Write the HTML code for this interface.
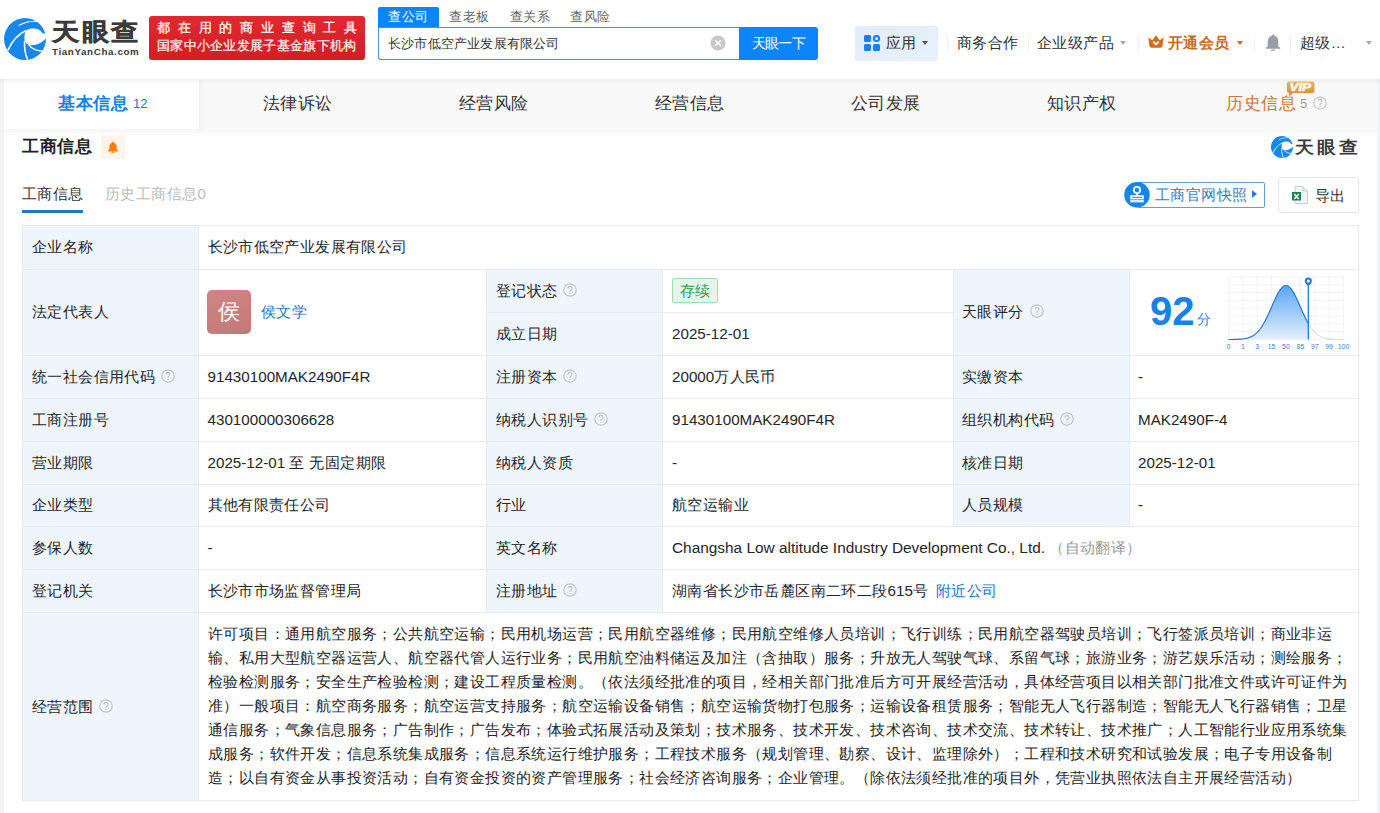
<!DOCTYPE html>
<html><head><meta charset="utf-8">
<style>
*{box-sizing:border-box;margin:0;padding:0}
html,body{width:1380px;height:813px;overflow:hidden}
body{background:#f2f3f5;font-family:"Liberation Sans",sans-serif;color:#333;position:relative}
.a{position:absolute;white-space:nowrap}
.s{}
</style></head><body>
<div class="a" style="left:0px;top:0px;width:1380px;height:79px;background:#fff;"></div>
<svg class="a" style="left:4px;top:18px" width="42" height="42" viewBox="0 0 100 100"><circle cx="50" cy="50" r="50" fill="#1787ec"/>
<path d="M53 30 C58 25 65 24.5 72 25 C82 26 89 30 91 36 L101 38 L101 47.7 C90 60 72 67 59 64 C52 60 48.5 55 48.5 48 C48.5 40 50 34 53 30 Z" fill="#fff"/>
<path d="M9 77 C17 60 30 40 53 30" fill="none" stroke="#fff" stroke-width="3.8"/>
<path d="M35 18 C49 10 64 6.5 79 8" fill="none" stroke="#fff" stroke-width="2.6"/>
<path d="M56.5 99 C50 86 48 72 49 54" fill="none" stroke="#fff" stroke-width="3.8"/>
<path d="M59 64 C66 73 78 78.5 92 79" fill="none" stroke="#fff" stroke-width="3.2"/></svg>
<div class="a " style="left:52px;top:17.0px;font-size:27px;line-height:30px;color:#3b3b3b;letter-spacing:2.5px;font-weight:bold;transform:scaleY(0.88);transform-origin:0 50%;-webkit-text-stroke:0.6px #3b3b3b;">天眼查</div>
<div class="a " style="left:52px;top:46.0px;font-size:9.8px;line-height:12px;color:#3b3b3b;letter-spacing:0.62px;font-weight:bold;">TianYanCha.com</div>
<div class="a" style="left:149px;top:16px;width:216px;height:44px;background:linear-gradient(180deg,#e2282e,#d21e26);border-radius:3px;"></div>
<div class="a " style="left:157px;top:20.0px;font-size:13px;line-height:16px;color:#fdf1ea;letter-spacing:7.8px;-webkit-text-stroke:0.35px #fdf1ea;">都在用的商业查询工具</div>
<div class="a " style="left:157px;top:38.0px;font-size:13px;line-height:16px;color:#fdf1ea;letter-spacing:0.3px;-webkit-text-stroke:0.25px #fdf1ea;">国家中小企业发展子基金旗下机构</div>
<div class="a" style="left:378px;top:7px;width:61px;height:20px;background:#0b84fc;border-radius:2px 2px 0 0;"></div>
<div class="a " style="left:388px;top:7.5px;font-size:13px;line-height:18px;color:#fff;letter-spacing:0.6px;">查公司</div>
<div class="a " style="left:449px;top:7.5px;font-size:13px;line-height:18px;color:#666;letter-spacing:0.6px;">查老板</div>
<div class="a " style="left:509.5px;top:7.5px;font-size:13px;line-height:18px;color:#666;letter-spacing:0.6px;">查关系</div>
<div class="a " style="left:570px;top:7.5px;font-size:13px;line-height:18px;color:#666;letter-spacing:0.6px;">查风险</div>
<div class="a" style="left:378px;top:27px;width:362px;height:33px;border:1px solid #4a93d4;border-right:none;border-radius:0 0 0 3px;background:#fff"></div>
<div class="a " style="left:388px;top:34.5px;font-size:13px;line-height:18px;color:#333;letter-spacing:0.2px;">长沙市低空产业发展有限公司</div>
<svg class="a" style="left:710px;top:35px" width="16" height="16" viewBox="0 0 16 16"><circle cx="8" cy="8" r="7.5" fill="#c6c8cc"/><path d="M5.2 5.2L10.8 10.8M10.8 5.2L5.2 10.8" stroke="#fff" stroke-width="1.6"/></svg>
<div class="a" style="left:739px;top:27px;width:79px;height:33px;background:#0b84fc;border-radius:0 3px 3px 0;"></div>
<div class="a " style="left:751.5px;top:33.5px;font-size:14px;line-height:18px;color:#fff;letter-spacing:-0.6px;">天眼一下</div>
<div class="a" style="left:855px;top:26px;width:83px;height:35px;background:linear-gradient(160deg,#e1edfb,#e8f1fb);border-radius:2px;"></div>
<svg class="a" style="left:864px;top:35px" width="16" height="16" viewBox="0 0 16 16">
<rect x="0" y="0" width="7" height="7" rx="1.5" fill="#1a7ff0"/>
<circle cx="12.5" cy="3.5" r="2.6" fill="none" stroke="#1a7ff0" stroke-width="2"/>
<rect x="0" y="9" width="7" height="7" rx="1.5" fill="#1a7ff0"/>
<rect x="9" y="9" width="7" height="7" rx="1.5" fill="#1a7ff0"/></svg>
<div class="a " style="left:886px;top:32.5px;font-size:15px;line-height:20px;color:#333;letter-spacing:0.4px;">应用</div>
<div class="a" style="left:922px;top:40.5px;width:0;height:0;border-left:3.5px solid transparent;border-right:3.5px solid transparent;border-top:4px solid #555"></div>
<div class="a" style="left:947px;top:35px;width:1px;height:17px;background:#f1f1f1;"></div>
<div class="a" style="left:1028px;top:35px;width:1px;height:17px;background:#f1f1f1;"></div>
<div class="a" style="left:1138px;top:35px;width:1px;height:17px;background:#f1f1f1;"></div>
<div class="a" style="left:1254px;top:35px;width:1px;height:17px;background:#f1f1f1;"></div>
<div class="a" style="left:1290px;top:35px;width:1px;height:17px;background:#f1f1f1;"></div>
<div class="a " style="left:957px;top:32.5px;font-size:15px;line-height:20px;color:#333;letter-spacing:0.4px;">商务合作</div>
<div class="a " style="left:1037px;top:32.5px;font-size:15px;line-height:20px;color:#333;letter-spacing:0.4px;">企业级产品</div>
<div class="a" style="left:1120px;top:41px;width:0;height:0;border-left:3.5px solid transparent;border-right:3.5px solid transparent;border-top:4px solid #aaa"></div>
<svg class="a" style="left:1148px;top:35px" width="16" height="13" viewBox="0 0 16 13">
<path d="M0.3 2.5 L4.3 5.2 L8 0.2 L11.7 5.2 L15.7 2.5 L14.6 10.8 Q14.4 12.8 12.4 12.8 L3.6 12.8 Q1.6 12.8 1.4 10.8 Z" fill="#d46c1e"/>
<path d="M5.3 6.6 L8 9.6 L10.7 6.6" fill="none" stroke="#fff" stroke-width="1.7"/></svg>
<div class="a " style="left:1168px;top:32.5px;font-size:15px;line-height:20px;color:#c96a1f;letter-spacing:0.4px;font-weight:bold;">开通会员</div>
<div class="a" style="left:1237px;top:41px;width:0;height:0;border-left:3.5px solid transparent;border-right:3.5px solid transparent;border-top:4px solid #d46c1e"></div>
<svg class="a" style="left:1265px;top:34px" width="16" height="17" viewBox="0 0 16 17">
<rect x="7.2" y="0.3" width="1.6" height="2" rx=".8" fill="#9a9ea3"/>
<path d="M8 1.6c3.3 0 5.3 2.6 5.3 5.8v5.2l1.9 1.2v.9H.8v-.9l1.9-1.2V7.4C2.7 4.2 4.7 1.6 8 1.6z" fill="#9a9ea3"/>
<rect x="5.8" y="15.4" width="4.4" height="1.4" rx=".7" fill="#9a9ea3"/></svg>
<div class="a " style="left:1300px;top:32.5px;font-size:15px;line-height:20px;color:#333;letter-spacing:0.4px;">超级…</div>
<div class="a" style="left:1366px;top:41px;width:0;height:0;border-left:3.5px solid transparent;border-right:3.5px solid transparent;border-top:4px solid #aaa"></div>
<div class="a" style="left:4px;top:79px;width:1373px;height:54px;background:#f9f9f9;"></div>
<div class="a" style="left:4px;top:80px;width:195px;height:49px;background:#fff;"></div>
<div class="a" style="left:199px;top:80px;width:7px;height:49px;background:linear-gradient(90deg,rgba(0,0,0,0.025),rgba(0,0,0,0));"></div>
<div class="a" style="left:0px;top:79px;width:1380px;height:6px;background:linear-gradient(rgba(0,0,0,0.045),rgba(0,0,0,0));"></div>
<div class="a " style="left:58px;top:93.0px;font-size:17px;line-height:22px;color:#1281e8;letter-spacing:0.6px;font-weight:bold;">基本信息</div>
<div class="a " style="left:133px;top:95.5px;font-size:13px;line-height:16px;color:#1b74cc;">12</div>
<div class="a " style="left:262.5px;top:93.0px;font-size:17px;line-height:22px;color:#333;letter-spacing:0.6px;">法律诉讼</div>
<div class="a " style="left:458.5px;top:93.0px;font-size:17px;line-height:22px;color:#333;letter-spacing:0.6px;">经营风险</div>
<div class="a " style="left:654.5px;top:93.0px;font-size:17px;line-height:22px;color:#333;letter-spacing:0.6px;">经营信息</div>
<div class="a " style="left:850.5px;top:93.0px;font-size:17px;line-height:22px;color:#333;letter-spacing:0.6px;">公司发展</div>
<div class="a " style="left:1046.5px;top:93.0px;font-size:17px;line-height:22px;color:#333;letter-spacing:0.6px;">知识产权</div>
<div class="a " style="left:1226px;top:93.0px;font-size:17px;line-height:22px;color:#c8782f;letter-spacing:0.6px;">历史信息</div>
<div class="a " style="left:1300px;top:95.5px;font-size:13px;line-height:16px;color:#999;">5</div>
<svg class="a" style="left:1313px;top:96.0px" width="14" height="14" viewBox="0 0 14 14"><circle cx="7" cy="7" r="6.2" fill="none" stroke="#c4c8cc" stroke-width="1.2"/><path d="M5 5.4a2 2 0 1 1 2.9 1.8c-.6.3-.9.6-.9 1.3v.4" fill="none" stroke="#c4c8cc" stroke-width="1.2"/><circle cx="7" cy="10.4" r=".7" fill="#c4c8cc"/></svg>
<svg class="a" style="left:1286px;top:81px" width="29" height="16" viewBox="0 0 29 16">
<defs><linearGradient id="vg" x1="0" y1="0" x2="0" y2="1"><stop offset="0" stop-color="#eeb25a"/><stop offset="1" stop-color="#d98a2a"/></linearGradient></defs>
<path d="M3 0.5H26.5a2 2 0 0 1 2 2V10a2 2 0 0 1-2 2H7L3 15.5V12a2 2 0 0 1-2-2V2.5a2 2 0 0 1 2-2z" fill="url(#vg)"/>
<text x="3.5" y="10.2" textLength="21.5" lengthAdjust="spacingAndGlyphs" font-family="Liberation Sans" font-weight="bold" font-style="italic" font-size="10.5" fill="#fffbe8" stroke="#fffbe8" stroke-width="0.6">VIP</text></svg>
<div class="a" style="left:4px;top:133px;width:1373px;height:680px;background:#fff;"></div>
<div class="a" style="left:4px;top:129px;width:1373px;height:5px;background:linear-gradient(rgba(0,0,0,0.012),rgba(0,0,0,0));"></div>
<div class="a " style="left:22px;top:136.0px;font-size:17px;line-height:22px;color:#222;letter-spacing:0.6px;font-weight:bold;">工商信息</div>
<div class="a" style="left:101px;top:135px;width:24px;height:24px;background:#fdf4eb;border-radius:2px;"></div>
<svg class="a" style="left:107px;top:141px" width="12" height="12" viewBox="0 0 14 14">
<path d="M7 .5c.6 0 1 .4 1 1v.4c2 .5 3.3 2.3 3.3 4.6v3l1.5 1.8v.9H1.2v-.9l1.5-1.8v-3C2.7 4.2 4 2.4 6 1.9v-.4c0-.6.4-1 1-1z" fill="#ff7d0f"/>
<rect x="5" y="12.3" width="4" height="1.5" rx=".75" fill="#ff7d0f"/></svg>
<svg class="a" style="left:1271px;top:136px" width="22" height="22" viewBox="0 0 100 100"><circle cx="50" cy="50" r="50" fill="#1787ec"/>
<path d="M53 30 C58 25 65 24.5 72 25 C82 26 89 30 91 36 L101 38 L101 47.7 C90 60 72 67 59 64 C52 60 48.5 55 48.5 48 C48.5 40 50 34 53 30 Z" fill="#fff"/>
<path d="M9 77 C17 60 30 40 53 30" fill="none" stroke="#fff" stroke-width="3.8"/>
<path d="M35 18 C49 10 64 6.5 79 8" fill="none" stroke="#fff" stroke-width="2.6"/>
<path d="M56.5 99 C50 86 48 72 49 54" fill="none" stroke="#fff" stroke-width="3.8"/>
<path d="M59 64 C66 73 78 78.5 92 79" fill="none" stroke="#fff" stroke-width="3.2"/></svg>
<div class="a " style="left:1295px;top:136.5px;font-size:19px;line-height:22px;color:#3b3b3b;letter-spacing:3.1px;font-weight:bold;transform:scaleY(0.9);transform-origin:0 50%;">天眼查</div>
<div class="a " style="left:22px;top:183.5px;font-size:15px;line-height:20px;color:#333;letter-spacing:0.4px;">工商信息</div>
<div class="a" style="left:22px;top:210px;width:61px;height:3px;background:#1f78cc;"></div>
<div class="a " style="left:105px;top:183.5px;font-size:15px;line-height:20px;color:#bbb;letter-spacing:0.4px;">历史工商信息0</div>
<div class="a" style="left:1137px;top:182px;width:128px;height:26px;border:1px solid #6a9cc8;border-radius:2px;background:#fff"></div>
<svg class="a" style="left:1123px;top:181px" width="28" height="28" viewBox="0 0 28 28">
<circle cx="14" cy="13.8" r="12.75" fill="#1384f0"/>
<circle cx="14" cy="9.1" r="3.2" fill="none" stroke="#fff" stroke-width="1.8"/>
<path d="M14 12.2v2.6" stroke="#fff" stroke-width="1.8"/>
<rect x="8" y="15" width="12" height="2.6" fill="none" stroke="#fff" stroke-width="1.6"/>
<rect x="7.2" y="19" width="13.6" height="2.4" fill="#dcecff"/></svg>
<div class="a " style="left:1155px;top:184.5px;font-size:15px;line-height:20px;color:#3a7cc0;letter-spacing:0.4px;">工商官网快照</div>
<div class="a" style="left:1252px;top:190px;width:0;height:0;border-top:4px solid transparent;border-bottom:4px solid transparent;border-left:5px solid #2a78c8"></div>
<div class="a" style="left:1278px;top:177px;width:81px;height:36px;border:1px solid #e3e5e8;border-radius:3px;background:#fff"></div>
<svg class="a" style="left:1292px;top:186px" width="16" height="18" viewBox="0 0 16 18">
<path d="M3 .5h8l4.5 4.5v12.5H3z" fill="#f4f5f6" stroke="#c9cdd2" stroke-width="1"/>
<path d="M11 .5v4.5h4.5" fill="#e4e6e8" stroke="#c9cdd2" stroke-width="1"/>
<rect x="0" y="6" width="9" height="8.5" fill="#22804f"/>
<path d="M2.2 8l4.6 5M6.8 8l-4.6 5" stroke="#fff" stroke-width="1.3"/></svg>
<div class="a " style="left:1315px;top:185.5px;font-size:15px;line-height:20px;color:#333;letter-spacing:0.4px;">导出</div>
<div class="a" style="left:22px;top:225px;width:1337px;height:576px;background:#fff;"></div>
<div class="a" style="left:22px;top:225px;width:176px;height:576px;background:#eef5fd;"></div>
<div class="a" style="left:486px;top:269px;width:176px;height:343px;background:#eef5fd;"></div>
<div class="a" style="left:953px;top:269px;width:176px;height:257px;background:#eef5fd;"></div>
<div class="a" style="left:22px;top:225px;width:1337px;height:1px;background:#e8ebee;"></div>
<div class="a" style="left:22px;top:800px;width:1337px;height:1px;background:#e8ebee;"></div>
<div class="a" style="left:22px;top:269px;width:1337px;height:1px;background:#e8ebee;"></div>
<div class="a" style="left:22px;top:355px;width:1337px;height:1px;background:#e8ebee;"></div>
<div class="a" style="left:22px;top:398px;width:1337px;height:1px;background:#e8ebee;"></div>
<div class="a" style="left:22px;top:441px;width:1337px;height:1px;background:#e8ebee;"></div>
<div class="a" style="left:22px;top:484px;width:1337px;height:1px;background:#e8ebee;"></div>
<div class="a" style="left:22px;top:526px;width:1337px;height:1px;background:#e8ebee;"></div>
<div class="a" style="left:22px;top:569px;width:1337px;height:1px;background:#e8ebee;"></div>
<div class="a" style="left:22px;top:612px;width:1337px;height:1px;background:#e8ebee;"></div>
<div class="a" style="left:486px;top:312px;width:467px;height:1px;background:#e8ebee;"></div>
<div class="a" style="left:22px;top:225px;width:1px;height:576px;background:#e8ebee;"></div>
<div class="a" style="left:1358px;top:225px;width:1px;height:576px;background:#e8ebee;"></div>
<div class="a" style="left:198px;top:225px;width:1px;height:576px;background:#e8ebee;"></div>
<div class="a" style="left:486px;top:269px;width:1px;height:343px;background:#e8ebee;"></div>
<div class="a" style="left:662px;top:269px;width:1px;height:343px;background:#e8ebee;"></div>
<div class="a" style="left:953px;top:269px;width:1px;height:257px;background:#e8ebee;"></div>
<div class="a" style="left:1129px;top:269px;width:1px;height:257px;background:#e8ebee;"></div>
<div class="a s" style="left:32px;top:237.0px;font-size:15px;line-height:20px;color:#262626;letter-spacing:0.4px;">企业名称</div>
<div class="a s" style="left:207.5px;top:237.0px;font-size:15px;line-height:20px;color:#262626;letter-spacing:0.4px;">长沙市低空产业发展有限公司</div>
<div class="a s" style="left:32px;top:302.0px;font-size:15px;line-height:20px;color:#262626;letter-spacing:0.4px;">法定代表人</div>
<div class="a" style="left:207px;top:290px;width:44px;height:44px;background:linear-gradient(160deg,#cf8585,#c47878);border-radius:5px;"></div>
<div class="a " style="left:218px;top:300.0px;font-size:22px;line-height:24px;color:#fff;">侯</div>
<div class="a " style="left:261px;top:301.5px;font-size:15px;line-height:20px;color:#1f74c8;letter-spacing:0.4px;">侯文学</div>
<div class="a s" style="left:496px;top:280.5px;font-size:15px;line-height:20px;color:#262626;letter-spacing:0.4px;">登记状态</div>
<svg class="a" style="left:563px;top:283.0px" width="14" height="14" viewBox="0 0 14 14"><circle cx="7" cy="7" r="6.2" fill="none" stroke="#bdc5cd" stroke-width="1.2"/><path d="M5 5.4a2 2 0 1 1 2.9 1.8c-.6.3-.9.6-.9 1.3v.4" fill="none" stroke="#bdc5cd" stroke-width="1.2"/><circle cx="7" cy="10.4" r=".7" fill="#bdc5cd"/></svg>
<div class="a" style="left:672px;top:278px;width:46px;height:25px;background:#e5f7eb;border:1px solid #a3dcb3;border-radius:2px;"></div>
<div class="a " style="left:680px;top:280.5px;font-size:15px;line-height:20px;color:#2f9a55;letter-spacing:0.4px;">存续</div>
<div class="a s" style="left:496px;top:323.5px;font-size:15px;line-height:20px;color:#262626;letter-spacing:0.4px;">成立日期</div>
<div class="a " style="left:672px;top:323.5px;font-size:15.2px;line-height:20px;color:#262626;">2025-12-01</div>
<div class="a s" style="left:962px;top:302.0px;font-size:15px;line-height:20px;color:#262626;letter-spacing:0.4px;">天眼评分</div>
<svg class="a" style="left:1029.5px;top:304.0px" width="14" height="14" viewBox="0 0 14 14"><circle cx="7" cy="7" r="6.2" fill="none" stroke="#bdc5cd" stroke-width="1.2"/><path d="M5 5.4a2 2 0 1 1 2.9 1.8c-.6.3-.9.6-.9 1.3v.4" fill="none" stroke="#bdc5cd" stroke-width="1.2"/><circle cx="7" cy="10.4" r=".7" fill="#bdc5cd"/></svg>
<div class="a " style="left:1150px;top:289.0px;font-size:40px;line-height:44px;color:#1681ea;font-weight:bold;">92</div>
<div class="a " style="left:1197px;top:309.5px;font-size:14px;line-height:18px;color:#3c7cc8;">分</div>
<svg class="a" style="left:1220px;top:272px" width="135" height="80" viewBox="1220 272 135 80"><defs><linearGradient id="cg" x1="0" y1="0" x2="0" y2="1"><stop offset="0" stop-color="#5aa6f4"/><stop offset="1" stop-color="#e4f0fc"/></linearGradient></defs><line x1="1228.5" y1="277" x2="1228.5" y2="339.5" stroke="#f1f2f4" stroke-width="1"/><line x1="1242.9" y1="277" x2="1242.9" y2="339.5" stroke="#f1f2f4" stroke-width="1"/><line x1="1257.2" y1="277" x2="1257.2" y2="339.5" stroke="#f1f2f4" stroke-width="1"/><line x1="1271.6" y1="277" x2="1271.6" y2="339.5" stroke="#f1f2f4" stroke-width="1"/><line x1="1286.0" y1="277" x2="1286.0" y2="339.5" stroke="#f1f2f4" stroke-width="1"/><line x1="1300.4" y1="277" x2="1300.4" y2="339.5" stroke="#f1f2f4" stroke-width="1"/><line x1="1314.8" y1="277" x2="1314.8" y2="339.5" stroke="#f1f2f4" stroke-width="1"/><line x1="1329.1" y1="277" x2="1329.1" y2="339.5" stroke="#f1f2f4" stroke-width="1"/><line x1="1343.5" y1="277" x2="1343.5" y2="339.5" stroke="#f1f2f4" stroke-width="1"/><line x1="1228.5" y1="277.0" x2="1343.5" y2="277.0" stroke="#f1f2f4" stroke-width="1"/><line x1="1228.5" y1="284.8" x2="1343.5" y2="284.8" stroke="#f1f2f4" stroke-width="1"/><line x1="1228.5" y1="292.6" x2="1343.5" y2="292.6" stroke="#f1f2f4" stroke-width="1"/><line x1="1228.5" y1="300.4" x2="1343.5" y2="300.4" stroke="#f1f2f4" stroke-width="1"/><line x1="1228.5" y1="308.2" x2="1343.5" y2="308.2" stroke="#f1f2f4" stroke-width="1"/><line x1="1228.5" y1="316.1" x2="1343.5" y2="316.1" stroke="#f1f2f4" stroke-width="1"/><line x1="1228.5" y1="323.9" x2="1343.5" y2="323.9" stroke="#f1f2f4" stroke-width="1"/><line x1="1228.5" y1="331.7" x2="1343.5" y2="331.7" stroke="#f1f2f4" stroke-width="1"/><line x1="1228.5" y1="339.5" x2="1343.5" y2="339.5" stroke="#f1f2f4" stroke-width="1"/><path d="M1228.5,339.5 L1229.5,339.5 L1230.5,339.5 L1231.5,339.5 L1232.5,339.5 L1233.5,339.4 L1234.5,339.4 L1235.5,339.4 L1236.5,339.4 L1237.5,339.3 L1238.5,339.3 L1239.5,339.2 L1240.5,339.2 L1241.5,339.1 L1242.5,339.0 L1243.5,338.8 L1244.5,338.7 L1245.5,338.5 L1246.5,338.3 L1247.5,338.1 L1248.5,337.8 L1249.5,337.4 L1250.5,337.0 L1251.5,336.6 L1252.5,336.0 L1253.5,335.4 L1254.5,334.7 L1255.5,333.9 L1256.5,333.1 L1257.5,332.1 L1258.5,331.0 L1259.5,329.8 L1260.5,328.5 L1261.5,327.1 L1262.5,325.5 L1263.5,323.8 L1264.5,322.1 L1265.5,320.2 L1266.5,318.2 L1267.5,316.1 L1268.5,314.0 L1269.5,311.7 L1270.5,309.5 L1271.5,307.2 L1272.5,304.9 L1273.5,302.6 L1274.5,300.4 L1275.5,298.3 L1276.5,296.2 L1277.5,294.2 L1278.5,292.4 L1279.5,290.8 L1280.5,289.3 L1281.5,288.1 L1282.5,287.1 L1283.5,286.3 L1284.5,285.8 L1285.5,285.5 L1286.5,285.5 L1287.5,285.8 L1288.5,286.3 L1289.5,287.1 L1290.5,288.1 L1291.5,289.3 L1292.5,290.8 L1293.5,292.4 L1294.5,294.2 L1295.5,296.2 L1296.5,298.3 L1297.5,300.4 L1298.5,302.6 L1299.5,304.9 L1300.5,307.2 L1301.5,309.5 L1302.5,311.7 L1303.5,314.0 L1304.5,316.1 L1305.5,318.2 L1306.5,320.2 L1307.5,322.1 L1308.3,323.5 L1308.3,339.5 L1228.5,339.5 Z" fill="url(#cg)"/><path d="M1228.5,339.5 L1229.5,339.5 L1230.5,339.5 L1231.5,339.5 L1232.5,339.5 L1233.5,339.4 L1234.5,339.4 L1235.5,339.4 L1236.5,339.4 L1237.5,339.3 L1238.5,339.3 L1239.5,339.2 L1240.5,339.2 L1241.5,339.1 L1242.5,339.0 L1243.5,338.8 L1244.5,338.7 L1245.5,338.5 L1246.5,338.3 L1247.5,338.1 L1248.5,337.8 L1249.5,337.4 L1250.5,337.0 L1251.5,336.6 L1252.5,336.0 L1253.5,335.4 L1254.5,334.7 L1255.5,333.9 L1256.5,333.1 L1257.5,332.1 L1258.5,331.0 L1259.5,329.8 L1260.5,328.5 L1261.5,327.1 L1262.5,325.5 L1263.5,323.8 L1264.5,322.1 L1265.5,320.2 L1266.5,318.2 L1267.5,316.1 L1268.5,314.0 L1269.5,311.7 L1270.5,309.5 L1271.5,307.2 L1272.5,304.9 L1273.5,302.6 L1274.5,300.4 L1275.5,298.3 L1276.5,296.2 L1277.5,294.2 L1278.5,292.4 L1279.5,290.8 L1280.5,289.3 L1281.5,288.1 L1282.5,287.1 L1283.5,286.3 L1284.5,285.8 L1285.5,285.5 L1286.5,285.5 L1287.5,285.8 L1288.5,286.3 L1289.5,287.1 L1290.5,288.1 L1291.5,289.3 L1292.5,290.8 L1293.5,292.4 L1294.5,294.2 L1295.5,296.2 L1296.5,298.3 L1297.5,300.4 L1298.5,302.6 L1299.5,304.9 L1300.5,307.2 L1301.5,309.5 L1302.5,311.7 L1303.5,314.0 L1304.5,316.1 L1305.5,318.2 L1306.5,320.2 L1307.5,322.1 L1308.3,323.5" fill="none" stroke="#2a74c2" stroke-width="1.2"/><path d="M1308.3,323.5 L1308.5,323.8 L1309.5,325.5 L1310.5,327.1 L1311.5,328.5 L1312.5,329.8 L1313.5,331.0 L1314.5,332.1 L1315.5,333.1 L1316.5,333.9 L1317.5,334.7 L1318.5,335.4 L1319.5,336.0 L1320.5,336.6 L1321.5,337.0 L1322.5,337.4 L1323.5,337.8 L1324.5,338.1 L1325.5,338.3 L1326.5,338.5 L1327.5,338.7 L1328.5,338.8 L1329.5,339.0 L1330.5,339.1 L1331.5,339.2 L1332.5,339.2 L1333.5,339.3 L1334.5,339.3 L1335.5,339.4 L1336.5,339.4 L1337.5,339.4 L1338.5,339.4 L1339.5,339.5 L1340.5,339.5 L1341.5,339.5 L1342.5,339.5 L1343.5,339.5" fill="none" stroke="#d0d4d8" stroke-width="1"/><line x1="1308.3" y1="282" x2="1308.3" y2="339.5" stroke="#1f7fdf" stroke-width="1.3"/><path d="M1304.7,281 a3.6,3.6 0 1 1 7.2,0 c0,2-2,3.5-3.6,5.5 c-1.6,-2-3.6,-3.5-3.6,-5.5z" fill="#1f7fdf"/><circle cx="1308.3" cy="281" r="1.5" fill="#fff"/><text x="1228.5" y="348.5" text-anchor="middle" font-family="Liberation Sans" font-size="7" fill="#3f7fcc">0</text><text x="1242.9" y="348.5" text-anchor="middle" font-family="Liberation Sans" font-size="7" fill="#3f7fcc">1</text><text x="1257.2" y="348.5" text-anchor="middle" font-family="Liberation Sans" font-size="7" fill="#3f7fcc">3</text><text x="1271.6" y="348.5" text-anchor="middle" font-family="Liberation Sans" font-size="7" fill="#3f7fcc">15</text><text x="1286.0" y="348.5" text-anchor="middle" font-family="Liberation Sans" font-size="7" fill="#3f7fcc">50</text><text x="1300.4" y="348.5" text-anchor="middle" font-family="Liberation Sans" font-size="7" fill="#3f7fcc">85</text><text x="1314.8" y="348.5" text-anchor="middle" font-family="Liberation Sans" font-size="7" fill="#3f7fcc">97</text><text x="1329.1" y="348.5" text-anchor="middle" font-family="Liberation Sans" font-size="7" fill="#3f7fcc">99</text><text x="1343.5" y="348.5" text-anchor="middle" font-family="Liberation Sans" font-size="7" fill="#3f7fcc">100</text></svg>
<div class="a s" style="left:32px;top:366.5px;font-size:15px;line-height:20px;color:#262626;letter-spacing:0.4px;">统一社会信用代码</div>
<svg class="a" style="left:160.5px;top:369.0px" width="14" height="14" viewBox="0 0 14 14"><circle cx="7" cy="7" r="6.2" fill="none" stroke="#bdc5cd" stroke-width="1.2"/><path d="M5 5.4a2 2 0 1 1 2.9 1.8c-.6.3-.9.6-.9 1.3v.4" fill="none" stroke="#bdc5cd" stroke-width="1.2"/><circle cx="7" cy="10.4" r=".7" fill="#bdc5cd"/></svg>
<div class="a " style="left:207.5px;top:366.5px;font-size:15.2px;line-height:20px;color:#262626;">91430100MAK2490F4R</div>
<div class="a s" style="left:496px;top:366.5px;font-size:15px;line-height:20px;color:#262626;letter-spacing:0.4px;">注册资本</div>
<svg class="a" style="left:563px;top:369.0px" width="14" height="14" viewBox="0 0 14 14"><circle cx="7" cy="7" r="6.2" fill="none" stroke="#bdc5cd" stroke-width="1.2"/><path d="M5 5.4a2 2 0 1 1 2.9 1.8c-.6.3-.9.6-.9 1.3v.4" fill="none" stroke="#bdc5cd" stroke-width="1.2"/><circle cx="7" cy="10.4" r=".7" fill="#bdc5cd"/></svg>
<div class="a " style="left:672px;top:366.5px;font-size:15.2px;line-height:20px;color:#262626;">20000<span style="font-size:15px;letter-spacing:0.4px">万人民币</span></div>
<div class="a s" style="left:962px;top:366.5px;font-size:15px;line-height:20px;color:#262626;letter-spacing:0.4px;">实缴资本</div>
<div class="a " style="left:1138px;top:366.5px;font-size:15.2px;line-height:20px;color:#262626;">-</div>
<div class="a s" style="left:32px;top:409.5px;font-size:15px;line-height:20px;color:#262626;letter-spacing:0.4px;">工商注册号</div>
<div class="a " style="left:207.5px;top:409.5px;font-size:15.2px;line-height:20px;color:#262626;">430100000306628</div>
<div class="a s" style="left:496px;top:409.5px;font-size:15px;line-height:20px;color:#262626;letter-spacing:0.4px;">纳税人识别号</div>
<svg class="a" style="left:593.5px;top:412.0px" width="14" height="14" viewBox="0 0 14 14"><circle cx="7" cy="7" r="6.2" fill="none" stroke="#bdc5cd" stroke-width="1.2"/><path d="M5 5.4a2 2 0 1 1 2.9 1.8c-.6.3-.9.6-.9 1.3v.4" fill="none" stroke="#bdc5cd" stroke-width="1.2"/><circle cx="7" cy="10.4" r=".7" fill="#bdc5cd"/></svg>
<div class="a " style="left:672px;top:409.5px;font-size:15.2px;line-height:20px;color:#262626;">91430100MAK2490F4R</div>
<div class="a s" style="left:962px;top:409.5px;font-size:15px;line-height:20px;color:#262626;letter-spacing:0.4px;">组织机构代码</div>
<svg class="a" style="left:1060px;top:412.0px" width="14" height="14" viewBox="0 0 14 14"><circle cx="7" cy="7" r="6.2" fill="none" stroke="#bdc5cd" stroke-width="1.2"/><path d="M5 5.4a2 2 0 1 1 2.9 1.8c-.6.3-.9.6-.9 1.3v.4" fill="none" stroke="#bdc5cd" stroke-width="1.2"/><circle cx="7" cy="10.4" r=".7" fill="#bdc5cd"/></svg>
<div class="a " style="left:1138px;top:409.5px;font-size:15.2px;line-height:20px;color:#262626;">MAK2490F-4</div>
<div class="a s" style="left:32px;top:452.5px;font-size:15px;line-height:20px;color:#262626;letter-spacing:0.4px;">营业期限</div>
<div class="a " style="left:207.5px;top:452.5px;font-size:15.2px;line-height:20px;color:#262626;">2025-12-01 <span style="font-size:15px;letter-spacing:0.4px">至 无固定期限</span></div>
<div class="a s" style="left:496px;top:452.5px;font-size:15px;line-height:20px;color:#262626;letter-spacing:0.4px;">纳税人资质</div>
<div class="a " style="left:672px;top:452.5px;font-size:15.2px;line-height:20px;color:#262626;">-</div>
<div class="a s" style="left:962px;top:452.5px;font-size:15px;line-height:20px;color:#262626;letter-spacing:0.4px;">核准日期</div>
<div class="a " style="left:1138px;top:452.5px;font-size:15.2px;line-height:20px;color:#262626;">2025-12-01</div>
<div class="a s" style="left:32px;top:495.0px;font-size:15px;line-height:20px;color:#262626;letter-spacing:0.4px;">企业类型</div>
<div class="a s" style="left:207.5px;top:495.0px;font-size:15px;line-height:20px;color:#262626;letter-spacing:0.4px;">其他有限责任公司</div>
<div class="a s" style="left:496px;top:495.0px;font-size:15px;line-height:20px;color:#262626;letter-spacing:0.4px;">行业</div>
<div class="a s" style="left:672px;top:495.0px;font-size:15px;line-height:20px;color:#262626;letter-spacing:0.4px;">航空运输业</div>
<div class="a s" style="left:962px;top:495.0px;font-size:15px;line-height:20px;color:#262626;letter-spacing:0.4px;">人员规模</div>
<div class="a " style="left:1138px;top:495.0px;font-size:15.2px;line-height:20px;color:#262626;">-</div>
<div class="a s" style="left:32px;top:537.5px;font-size:15px;line-height:20px;color:#262626;letter-spacing:0.4px;">参保人数</div>
<div class="a " style="left:207.5px;top:537.5px;font-size:15.2px;line-height:20px;color:#262626;">-</div>
<div class="a s" style="left:496px;top:537.5px;font-size:15px;line-height:20px;color:#262626;letter-spacing:0.4px;">英文名称</div>
<div class="a " style="left:672px;top:537.5px;font-size:15.4px;line-height:20px;color:#262626;">Changsha Low altitude Industry Development Co., Ltd. <span style="font-size:15px;letter-spacing:0.4px;color:#999">（自动翻译）</span></div>
<div class="a s" style="left:32px;top:580.5px;font-size:15px;line-height:20px;color:#262626;letter-spacing:0.4px;">登记机关</div>
<div class="a s" style="left:207.5px;top:580.5px;font-size:15px;line-height:20px;color:#262626;letter-spacing:0.4px;">长沙市市场监督管理局</div>
<div class="a s" style="left:496px;top:580.5px;font-size:15px;line-height:20px;color:#262626;letter-spacing:0.4px;">注册地址</div>
<svg class="a" style="left:563px;top:583.0px" width="14" height="14" viewBox="0 0 14 14"><circle cx="7" cy="7" r="6.2" fill="none" stroke="#bdc5cd" stroke-width="1.2"/><path d="M5 5.4a2 2 0 1 1 2.9 1.8c-.6.3-.9.6-.9 1.3v.4" fill="none" stroke="#bdc5cd" stroke-width="1.2"/><circle cx="7" cy="10.4" r=".7" fill="#bdc5cd"/></svg>
<div class="a s" style="left:672px;top:580.5px;font-size:15px;line-height:20px;color:#262626;letter-spacing:0.4px;">湖南省长沙市岳麓区南二环二段<span style="font-size:15.2px;letter-spacing:0">615</span>号 <span style="color:#1f74c8;margin-left:3px">附近公司</span></div>
<div class="a s" style="left:32px;top:696.5px;font-size:15px;line-height:20px;color:#262626;letter-spacing:0.4px;">经营范围</div>
<svg class="a" style="left:99px;top:698.5px" width="14" height="14" viewBox="0 0 14 14"><circle cx="7" cy="7" r="6.2" fill="none" stroke="#bdc5cd" stroke-width="1.2"/><path d="M5 5.4a2 2 0 1 1 2.9 1.8c-.6.3-.9.6-.9 1.3v.4" fill="none" stroke="#bdc5cd" stroke-width="1.2"/><circle cx="7" cy="10.4" r=".7" fill="#bdc5cd"/></svg>
<div class="a s" style="left:208px;top:624.0px;font-size:15px;line-height:20px;color:#262626;letter-spacing:0.4px;">许可项目：通用航空服务；公共航空运输；民用机场运营；民用航空器维修；民用航空维修人员培训；飞行训练；民用航空器驾驶员培训；飞行签派员培训；商业非运</div>
<div class="a s" style="left:208px;top:648.0px;font-size:15px;line-height:20px;color:#262626;letter-spacing:0.4px;">输、私用大型航空器运营人、航空器代管人运行业务；民用航空油料储运及加注（含抽取）服务；升放无人驾驶气球、系留气球；旅游业务；游艺娱乐活动；测绘服务；</div>
<div class="a s" style="left:208px;top:672.0px;font-size:15px;line-height:20px;color:#262626;letter-spacing:0.4px;">检验检测服务；安全生产检验检测；建设工程质量检测。（依法须经批准的项目，经相关部门批准后方可开展经营活动，具体经营项目以相关部门批准文件或许可证件为</div>
<div class="a s" style="left:208px;top:696.0px;font-size:15px;line-height:20px;color:#262626;letter-spacing:0.4px;">准）一般项目：航空商务服务；航空运营支持服务；航空运输设备销售；航空运输货物打包服务；运输设备租赁服务；智能无人飞行器制造；智能无人飞行器销售；卫星</div>
<div class="a s" style="left:208px;top:720.0px;font-size:15px;line-height:20px;color:#262626;letter-spacing:0.4px;">通信服务；气象信息服务；广告制作；广告发布；体验式拓展活动及策划；技术服务、技术开发、技术咨询、技术交流、技术转让、技术推广；人工智能行业应用系统集</div>
<div class="a s" style="left:208px;top:744.0px;font-size:15px;line-height:20px;color:#262626;letter-spacing:0.4px;">成服务；软件开发；信息系统集成服务；信息系统运行维护服务；工程技术服务（规划管理、勘察、设计、监理除外）；工程和技术研究和试验发展；电子专用设备制</div>
<div class="a s" style="left:208px;top:768.0px;font-size:15px;line-height:20px;color:#262626;letter-spacing:0.4px;">造；以自有资金从事投资活动；自有资金投资的资产管理服务；社会经济咨询服务；企业管理。（除依法须经批准的项目外，凭营业执照依法自主开展经营活动）</div>
</body></html>
